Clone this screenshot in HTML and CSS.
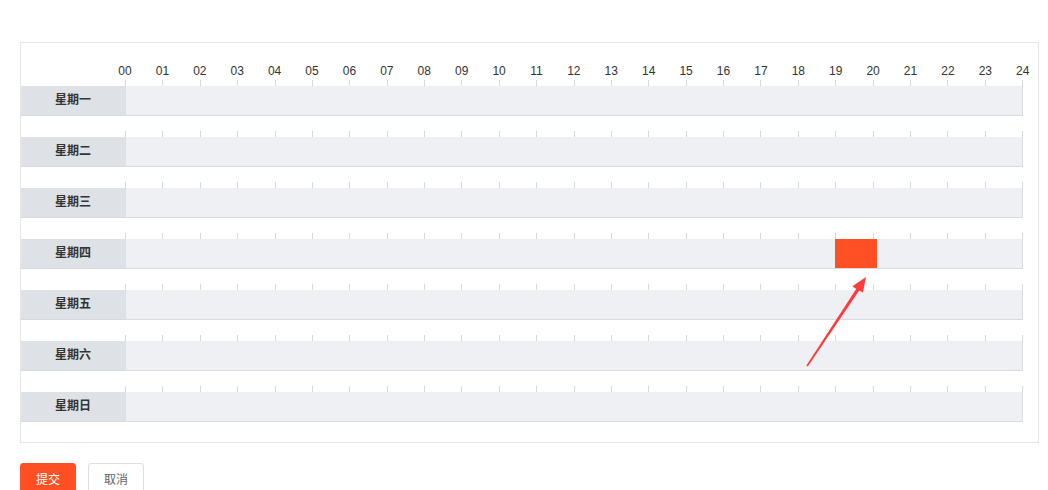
FILE: index.html
```html
<!DOCTYPE html>
<html lang="zh">
<head>
<meta charset="utf-8">
<title>时间段选择</title>
<link rel="stylesheet" href="styles.css">
</head>
<body>
<div class="panel">
  <div class="scale">
    <div class="hours">
      <span>00</span><span>01</span><span>02</span><span>03</span><span>04</span><span>05</span><span>06</span><span>07</span><span>08</span><span>09</span><span>10</span><span>11</span><span>12</span><span>13</span><span>14</span><span>15</span><span>16</span><span>17</span><span>18</span><span>19</span><span>20</span><span>21</span><span>22</span><span>23</span><span>24</span>
    </div>
  </div>
  <div class="week" id="week"></div>
</div>
<div class="actions">
  <button class="btn btn-primary">提交</button>
  <button class="btn btn-default">取消</button>
</div>
<svg class="arrow" viewBox="0 0 1048 490" width="1048" height="490">
  <polygon fill="#ff3b3b" points="806.4,365.6 856.2,288.9 852.4,286.3 866,277 863,292.6 859.2,290.6 807.8,366.4"/>
</svg>
<script>
  var days = ["星期一","星期二","星期三","星期四","星期五","星期六","星期日"];
  var week = document.getElementById("week");
  days.forEach(function (d, i) {
    var ticks = '<div class="ticks">' + new Array(26).join('<i></i>') + '</div>';
    var sel = i === 3 ? '<div class="selected"></div>' : '';
    var gap = i === 0 ? '' : '<div class="gap">' + ticks + '</div>';
    week.insertAdjacentHTML('beforeend',
      gap + (i === 0 ? ticks.replace('ticks', 'ticks first') : '') +
      '<div class="row"><div class="day">' + d + '</div><div class="bar">' + sel + '</div></div>');
  });
</script>
</body>
</html>
```

FILE: styles.css
```css
html, body {
  margin: 0;
  padding: 0;
  background: #fff;
}
body {
  position: relative;
  width: 1048px;
  height: 490px;
  overflow: hidden;
  font-family: "Liberation Sans", Arial, "Noto Sans CJK SC", sans-serif;
  color: #303133;
}
.panel {
  box-sizing: border-box;
  margin: 42px 0 0 20px;
  width: 1019px;
  border: 1px solid #e2e5ea;
  padding: 0 15px 20px 0;
}
.scale {
  padding: 21px 0 0 94px;
  margin-right: -10px;
}
.hours {
  display: flex;
  justify-content: space-between;
  height: 14px;
  line-height: 14px;
  font-size: 12px;
  color: #333;
}
.hours span {
  width: 20px;
  text-align: center;
}
.ticks {
  margin-left: 104px;
  height: 6px;
  display: flex;
  justify-content: space-between;
}
.ticks.first {
  margin-top: 2px;
}
.ticks i {
  width: 1px;
  height: 6px;
  background: #d5d9df;
}
.gap {
  padding-top: 15px;
}
.row {
  display: flex;
  height: 30px;
}
.day {
  box-sizing: border-box;
  width: 104px;
  background: #dee1e5;
  border-bottom: 1px solid #d6d9de;
  font-size: 12px;
  font-weight: bold;
  line-height: 29px;
  text-align: center;
  color: #333;
}
.bar {
  position: relative;
  box-sizing: border-box;
  flex: 1;
  background: #eff0f4;
  border-left: 1px solid #dcdfe5;
  border-right: 1px solid #d8dbe1;
  border-bottom: 1px solid #d8dbe1;
}
.selected {
  position: absolute;
  left: 709px;
  top: 0;
  width: 42px;
  height: 29px;
  background: #ff4f24;
}
.actions {
  display: flex;
  gap: 12px;
  margin: 20px 0 0 20px;
}
.btn {
  box-sizing: border-box;
  width: 56px;
  height: 30px;
  border-radius: 3px;
  font-family: "Liberation Sans", Arial, "Noto Sans CJK SC", sans-serif;
  font-size: 12px;
  padding: 0;
  cursor: pointer;
}
.btn-primary {
  background: #ff4f24;
  border: 1px solid #ff4f24;
  color: #fff;
}
.btn-default {
  background: #fff;
  border: 1px solid #dcdfe6;
  color: #606266;
}
.arrow {
  position: absolute;
  left: 0;
  top: 0;
  pointer-events: none;
}
```
